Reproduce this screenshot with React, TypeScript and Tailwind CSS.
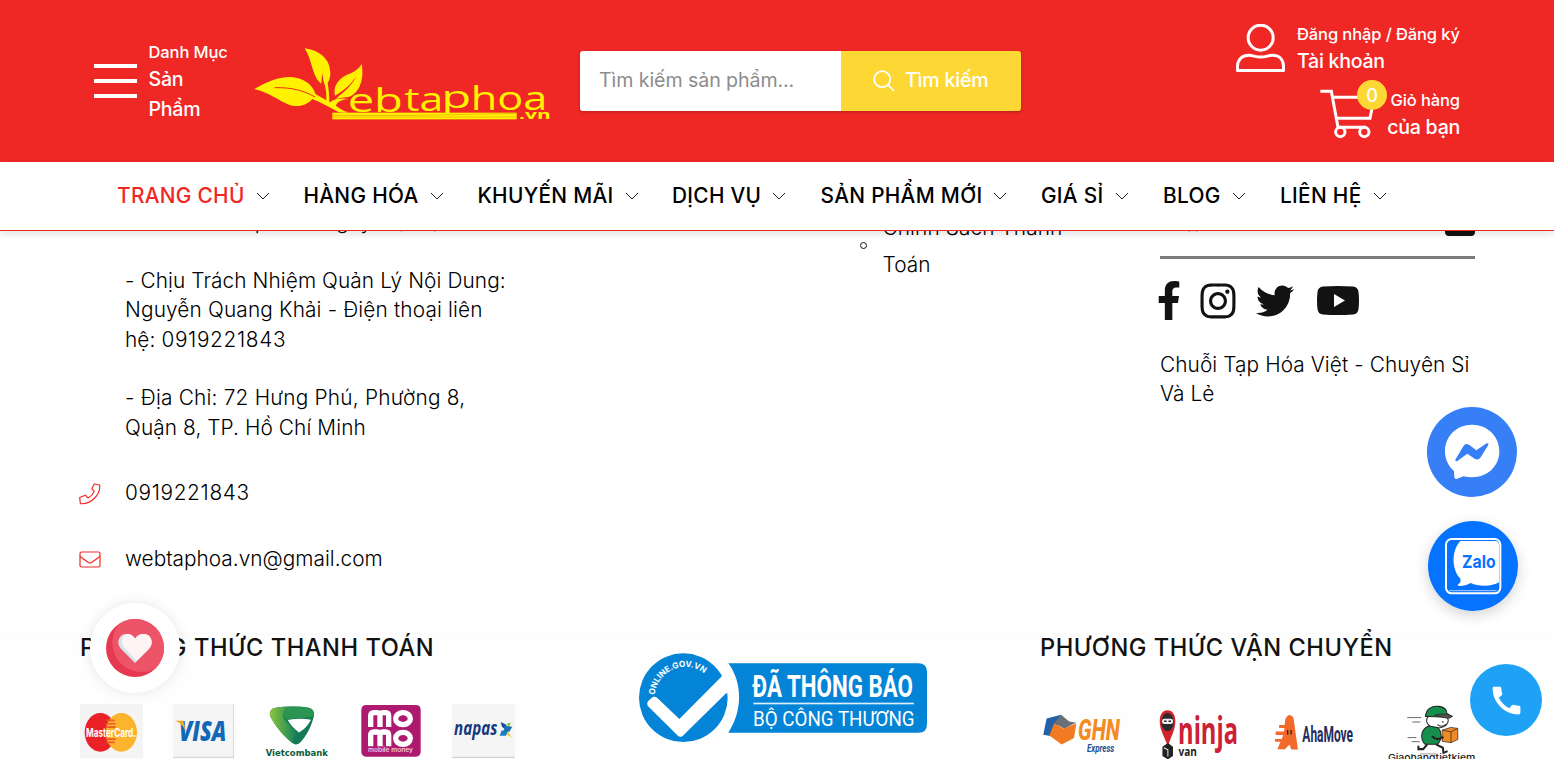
import React from "react";
import { FaFacebookF, FaInstagram, FaTwitter } from "react-icons/fa";
import { MdCall } from "react-icons/md";

const INTER = "Inter, sans-serif";

const menu = [
  { label: "TRANG CHỦ", active: true },
  { label: "HÀNG HÓA" },
  { label: "KHUYẾN MÃI" },
  { label: "DỊCH VỤ" },
  { label: "SẢN PHẨM MỚI" },
  { label: "GIÁ SỈ" },
  { label: "BLOG" },
  { label: "LIÊN HỆ" },
];

type FitProps = {
  x: number;
  y: number;
  w: number;
  size: number;
  fill: string;
  font?: string;
  weight?: number;
  italic?: boolean;
  children: string;
};

/** Logo lettering stretched to a fixed width. */
function Fit({ x, y, w, size, fill, font = INTER, weight = 400, italic, children }: FitProps) {
  return (
    <text
      x={x}
      y={y}
      textLength={w}
      lengthAdjust="spacingAndGlyphs"
      fontSize={size}
      fontFamily={font}
      fontWeight={weight}
      fontStyle={italic ? "italic" : "normal"}
      fill={fill}
    >
      {children}
    </text>
  );
}

function Chevron() {
  return (
    <svg className="ml-[11px] h-[8px] w-[14px] shrink-0" viewBox="0 0 14 8" fill="none" stroke="#222" strokeWidth="1">
      <path d="M1 1l6 6 6-6" />
    </svg>
  );
}

function BrandLogo() {
  return (
    <svg className="h-[75px] w-[300px] shrink-0 overflow-visible" viewBox="522 80 900 225">
      <g fill="#fff200">
        <path d="M523 206C560 185 590 170 630 170C670 172 696 190 707 222C735 236 775 262 800 277L775 275C750 262 722 246 697 236C685 250 665 259 645 257C610 254 580 220 523 206Z" />
        <path d="M674 84C715 90 750 112 751 158C751 172 747 182 743 188C746 205 748 228 748 246L739 242C740 222 738 200 731 184C730 178 728 167 727 158C725 170 725 180 724 190C697 172 698 122 674 84Z" />
        <path d="M845 130C852 170 843 205 818 224C800 235 785 230 768 236C778 222 812 206 829 166C812 196 785 214 765 226C758 190 785 170 805 162C825 153 838 145 845 130Z" />
        <path d="M750 246C760 236 780 232 806 236C785 238 768 245 768 258C775 268 790 272 806 276L782 276C765 268 750 258 750 246Z" />
      </g>
      <path d="M584 202C635 201 670 210 705 230" fill="none" stroke="#ef2826" strokeWidth="3" />
      <Fit x={803} y={274} w={166} size={98} fill="#fff200" font="Open Sans" weight={500}>eb</Fit>
      <Fit x={973} y={271} w={117} size={98} fill="#fff200" font="Open Sans" weight={500}>ta</Fit>
      <Fit x={1084} y={262} w={90} size={92} fill="#fff200" font="Open Sans" weight={500}>p</Fit>
      <Fit x={1172} y={268} w={230} size={100} fill="#fff200" font="Open Sans" weight={500}>hoa</Fit>
      <rect x="757" y="277" width="553" height="20" fill="#fff200" />
      <path d="M757 285H1010L1310 279M757 290H1310" fill="none" stroke="#e8a310" strokeWidth="2" />
      <Fit x={1317} y={297} w={95} size={38} fill="#fff200" font="Open Sans" weight={700}>.vn</Fit>
    </svg>
  );
}

function UserIcon() {
  return (
    <svg className="h-[48px] w-[49px] shrink-0" viewBox="108 42 147 144" fill="none" stroke="#fff" strokeWidth="9">
      <circle cx="182" cy="83" r="37.5" />
      <path d="M112.500 181.500V170C112.500 150 125 136 146 136C160 136 165 141 182 141C199 141 204 136 218 136C239 136 250.500 150 250.500 170V181.500Z" strokeLinejoin="round" />
    </svg>
  );
}

function CartIcon() {
  return (
    <svg className="h-[48px] w-[54px] shrink-0 overflow-visible" viewBox="361 240 162 144" fill="none" stroke="#fff" strokeWidth="9">
      <path d="M362 244H395L415 352H498" />
      <path d="M399 262H524L511 325H411" />
      <circle cx="422" cy="366" r="14" />
      <circle cx="494" cy="366" r="14" />
    </svg>
  );
}

function PaymentLogos() {
  return (
    <div className="flex h-[55px] items-start">
      <svg className="h-[54.5px] w-[63px] shrink-0" viewBox="60 343 189 163">
        <rect x="60" y="343" width="189" height="163" fill="#f4f4f5" />
        <ellipse cx="121" cy="428" rx="47" ry="58" fill="#ea2127" />
        <ellipse cx="184" cy="428" rx="47" ry="58" fill="#fcb42e" />
        <path d="M139 392H164M137 402H167M137 412H167M137 448H167M139 458H164" stroke="#ee5a28" strokeWidth="5" />
        <Fit x={78} y={441} w={150} size={34} fill="#fff" weight={700}>MasterCard.</Fit>
      </svg>
      <svg className="ml-[30px] h-[54.5px] w-[61px] shrink-0" viewBox="339 343 183 163">
        <rect x="339" y="343" width="183" height="163" fill="#f5f5f6" />
        <path d="M521 343V506M339 503H521" stroke="#d5dade" strokeWidth="4" />
        <Fit x={357} y={454} w={142} size={86} fill="#1268b8" font="Open Sans" weight={800} italic>VISA</Fit>
        <path d="M345 393H370L377 424C370 408 360 399 345 393Z" fill="#f6a828" />
      </svg>
      <svg className="ml-[32px] h-[54.5px] w-[62px] shrink-0 overflow-visible" viewBox="620 343 186 163">
        <defs>
          <linearGradient id="vcb" x1="0" y1="0" x2="1" y2="0">
            <stop offset="0" stopColor="#8cc63e" />
            <stop offset="1" stopColor="#12805a" />
          </linearGradient>
        </defs>
        <path d="M648 354Q697 346 748 354Q766 358 764 377C757 410 740 440 722 459Q710 469 698 459C672 438 648 410 632 379Q628 358 648 354Z" fill="#147a55" />
        <path d="M648 354Q665 350 685 351C670 365 668 376 675 390L712 428L698 459C672 438 648 410 632 379Q628 358 648 354Z" fill="url(#vcb)" />
        <path d="M685 351Q725 349 748 354Q764 358 764 377C750 387 710 381 680 390C664 376 672 359 685 351Z" fill="#2b9450" />
        <path d="M685 391C710 386 733 386 755 390C747 405 737 418 719 428C705 418 693 406 685 391Z" fill="#fff" />
        <Fit x={619} y={500} w={187} size={26} fill="#0d5a3c" font="DejaVu Sans" weight={700}>Vietcombank</Fit>
      </svg>
      <svg className="ml-[32.5px] h-[54px] w-[60px] shrink-0" viewBox="902 344 180 162">
        <rect x="903" y="347" width="178" height="155" rx="14" fill="#ad1a70" />
        <g fill="none" stroke="#fff" strokeWidth="16">
          <path d="M931 413V380Q931 370 941 370H951Q959 370 959 380V413M959 380Q959 370 968 370H976Q985 370 985 380V413" />
          <path d="M931 471V438Q931 428 941 428H951Q959 428 959 438V471M959 438Q959 428 968 428H976Q985 428 985 438V471" />
          <ellipse cx="1028" cy="388" rx="22" ry="18" />
          <ellipse cx="1028" cy="447" rx="22" ry="18" />
        </g>
        <Fit x={923} y={487} w={135} size={17} fill="#f3c9df" weight={600}>mobile money</Fit>
      </svg>
      <svg className="ml-[31px] h-[54.5px] w-[63px] shrink-0" viewBox="1175 343 189 163">
        <rect x="1175" y="343" width="189" height="163" fill="#f5f5f6" />
        <path d="M1175 503H1364" stroke="#ccd4da" strokeWidth="4" />
        <Fit x={1181} y={436} w={130} size={58} fill="#14387f" font="Open Sans" weight={700} italic>napas</Fit>
        <path d="M1321 397L1338 405L1340 423L1325 411Z" fill="#174a92" />
        <path d="M1318 438L1324 422L1345 421L1337 438Z" fill="#1a7ec2" />
        <path d="M1340 401L1352 398L1344 416Z" fill="#8cc63e" />
        <path d="M1340 420L1354 444L1342 436Z" fill="#f3bd1f" />
        <path d="M1330 408L1356 411L1347 426L1332 426Z" fill="#1d6fb0" />
      </svg>
    </div>
  );
}

function GovBadge() {
  return (
    <svg className="h-[90px] w-[288px] shrink-0 overflow-visible" viewBox="57 38 864 270">
      <path d="M325 69H895Q921 69 921 95V250Q921 277 895 277H325C366 215 370 130 325 69Z" fill="#0484d6" />
      <circle cx="190" cy="172" r="133" fill="#0484d6" />
      <path d="M83 196Q79 187 87 180L98 170Q106 167 112 173L178 236L301 112L325 152L188 287Q180 293 172 285Z" fill="#fff" />
      <path d="M301 112L318 95L340 140L318 160Z" fill="#fff" />
      <path id="arc" d="M104 164A92 92 0 0 1 262 108" fill="none" />
      <text fontFamily="Inter, sans-serif" fontSize="25" fontWeight="700" fill="#fff">
        <textPath href="#arc" textLength="198" lengthAdjust="spacingAndGlyphs">ONLINE.GOV.VN</textPath>
      </text>
      <Fit x={397} y={169} w={482} size={92} fill="#fff" font="Roboto" weight={700}>ĐÃ THÔNG BÁO</Fit>
      <rect x="400" y="187" width="482" height="5" fill="#d9efff" />
      <Fit x={399} y={256} w={485} size={60} fill="#fff" font="Roboto">BỘ CÔNG THƯƠNG</Fit>
    </svg>
  );
}

function ShippingLogos() {
  return (
    <div className="flex h-[55px] items-start">
      <svg className="mt-[9.5px] ml-[3px] h-[41px] w-[77px] shrink-0 overflow-visible" viewBox="68 275 224 120">
        <path d="M78 288L120 277L132 300L110 300L105 342L68 336Z" fill="#2462a8" />
        <path d="M120 277L144 297L164 300L130 318L100 302Z" fill="#6d6f78" />
        <path d="M100 302L128 318L165 302L158 345L122 364L86 338Z" fill="#f27a22" />
        <Fit x={170} y={350} w={122} size={86} fill="#f58a1f" font="Roboto" weight={800} italic>GHN</Fit>
        <Fit x={196} y={386} w={80} size={32} fill="#26508f" font="Roboto" weight={700} italic>Express</Fit>
      </svg>
      <svg className="mt-[6px] ml-[39px] h-[49px] w-[79px] shrink-0 overflow-visible" viewBox="408 265 232 144">
        <path d="M433 266C448 266 456 280 456 298C456 325 442 345 434 372C425 345 410 325 410 298C410 280 418 266 433 266Z" fill="#d2232f" />
        <ellipse cx="433" cy="300" rx="18" ry="27" fill="#2b2b2e" />
        <rect x="417" y="291" width="32" height="15" rx="6" fill="#eee" />
        <path d="M423 298H430M436 298H443" stroke="#222" strokeWidth="5" />
        <path d="M418 373L434 362L449 373V400L434 410L418 400Z" fill="#222" />
        <path d="M422 376L434 382V402" fill="none" stroke="#eee" strokeWidth="3" />
        <Fit x={464} y={366} w={176} size={108} fill="#cc2036" font="Open Sans" weight={700}>ninja</Fit>
        <Fit x={465} y={400} w={54} size={38} fill="#222" font="Open Sans" weight={700}>van</Fit>
      </svg>
      <svg className="mt-[10px] ml-[37px] h-[36px] w-[78px] shrink-0 overflow-visible" viewBox="748 277 228 105">
        <path d="M778 292Q790 270 802 288L815 381H796L790 366L777 380H755L764 358H748V350H768L772 338H750V328H774L776 318H760V309H776Z" fill="#f26a2b" />
        <path d="M785 324V337M795 324V337" stroke="#222" strokeWidth="4" />
        <Fit x={828} y={358} w={148} size={66} fill="#1f2d5c" font="Roboto" weight={700}>AhaMove</Fit>
      </svg>
      <svg className="ml-[36px] h-[58px] w-[88px] shrink-0 overflow-visible" viewBox="1080 247 258 171">
        <path d="M1133 287H1174M1148 300H1172M1134 346H1160M1146 358H1170" stroke="#555" strokeWidth="2.5" />
        <ellipse cx="1222" cy="296" rx="32" ry="22" fill="#fff" stroke="#333" strokeWidth="3" />
        <path d="M1187 284C1188 262 1205 252 1225 254C1242 256 1250 265 1250 275L1265 284C1250 290 1230 282 1187 284Z" fill="#15904c" stroke="#222" strokeWidth="3" />
        <path d="M1214 280Q1240 272 1265 282Q1262 292 1246 288Z" fill="#555" stroke="#222" strokeWidth="2" />
        <path d="M1238 297V302M1222 308Q1235 318 1248 306" fill="none" stroke="#222" strokeWidth="3" />
        <path d="M1196 312C1172 322 1170 352 1186 366H1222C1238 350 1234 325 1222 316Z" fill="#15904c" stroke="#222" strokeWidth="3" />
        <path d="M1236 324L1262 316L1282 319V352L1262 361L1236 357Z" fill="#f08a24" stroke="#222" strokeWidth="2" />
        <path d="M1236 324L1262 329V361M1262 329L1282 319" fill="none" stroke="#222" strokeWidth="2" />
        <path d="M1206 342C1216 354 1228 352 1240 344M1192 366L1180 380H1166V370M1218 366L1238 376L1240 391L1252 386" fill="none" stroke="#222" strokeWidth="6" />
        <path d="M1170 394H1218" stroke="#777" strokeWidth="2" />
        <Fit x={1076} y={416} w={258} size={28} fill="#222" weight={500}>Giaohangtietkiem</Fit>
      </svg>
    </div>
  );
}

function Header() {
  return (
    <header className="flex h-[162px] shrink-0 items-start bg-[#ef2826] pl-[94px] font-medium text-white">
      <button className="flex font-medium">
        <span className="mt-[64px] flex w-[43px] flex-col gap-[11px]">
          <span className="h-[4px] bg-white" />
          <span className="h-[4px] bg-white" />
          <span className="h-[4px] bg-white" />
        </span>
        <span className="mt-[37px] ml-[11.5px] flex w-[105.5px] flex-col text-left text-[19.6px] leading-[30px] tracking-[-0.28px]">
          <span className="text-[16.5px] tracking-[-0.1px]">Danh Mục</span>
          <span className="-mt-[3px]">Sản</span>
          <span>Phẩm</span>
        </span>
      </button>
      <div className="mt-[46.5px]">
        <BrandLogo />
      </div>
      <form className="mt-[51px] ml-[26px] flex h-[60px] w-[441px] overflow-hidden rounded-[3px] text-[19.6px] shadow-[0_1px_3px_rgba(0,0,0,0.25)]">
        <div className="flex w-[261px] items-center bg-white pl-[19px] font-normal tracking-[-0.08px] text-[#8c8c8c]">
          Tìm kiếm sản phẩm...
        </div>
        <div className="flex flex-1 items-center bg-[#fdd835] pl-[32px]">
          <svg className="mr-[10px] h-[22px] w-[22px]" viewBox="0 0 22 22" fill="none" stroke="#fff" strokeWidth="1.7">
            <circle cx="9.2" cy="9.2" r="8" />
            <path d="M15 15l6 6" />
          </svg>
          <span className="tracking-[-0.2px]">Tìm kiếm</span>
        </div>
      </form>
      <div className="mt-[19px] mr-[94px] ml-auto flex flex-col items-end">
        <div className="flex h-[66px]">
          <div className="mt-[5px]">
            <UserIcon />
          </div>
          <div className="ml-[12px] w-[163px] text-[19.6px] leading-[30px] tracking-[-0.28px]">
            <div className="text-[16.5px] tracking-[-0.1px] whitespace-nowrap">Đăng nhập / Đăng ký</div>
            <div className="-mt-[3px]">Tài khoản</div>
          </div>
        </div>
        <div className="flex">
          <div className="relative mt-[5px]">
            <CartIcon />
            <span className="absolute -top-[10px] left-[37px] flex h-[30px] w-[30px] items-center justify-center rounded-full bg-[#fdd835] text-[18px]">
              0
            </span>
          </div>
          <div className="w-[86px] text-right text-[19.6px] leading-[30px] tracking-[-0.28px]">
            <div className="text-[16.5px] tracking-[-0.1px]">Giỏ hàng</div>
            <div className="-mt-[3px]">của bạn</div>
          </div>
        </div>
      </div>
    </header>
  );
}

function Nav() {
  return (
    <nav className="relative z-10 h-[69px] shrink-0 border-b border-[#ef2826] bg-white pl-[117px] shadow-[0_3px_8px_rgba(0,0,0,0.12)]">
      <ul className="grid h-[68px] grid-cols-[186.5px_174px_194.5px_148.5px_220.5px_122px_117px_auto] items-center text-[20.8px] font-medium tracking-[0.32px] whitespace-nowrap text-black">
        {menu.map((m) => (
          <li key={m.label} className="flex items-center">
            <span className={m.active ? "text-[#ef2826]" : ""}>{m.label}</span>
            <Chevron />
          </li>
        ))}
      </ul>
    </nav>
  );
}

export default function App() {
  return (
    <div className="relative flex h-[759px] w-full flex-col overflow-hidden bg-white font-[Inter,sans-serif] text-[#121212]">
      <Header />
      <Nav />
      <main className="flex min-h-0 flex-1 flex-col">
        <div className="flex h-[402px] shrink-0 text-[20.8px] leading-[29.4px] font-light tracking-[0.1px] whitespace-nowrap text-black">
          <section className="-mt-[24px] w-[859px] pl-[80px]">
            <div className="pl-[45px]">
              <p className="tracking-[0.3px]">- KH &amp; ĐT cấp lần 1 ngày 12/05/2020</p>
              <p className="mt-[29.4px]">
                - Chịu Trách Nhiệm Quản Lý Nội Dung:
                <br />
                <span className="tracking-[0.16px]">Nguyễn Quang Khải - Điện thoại liên</span>
                <br />
                hệ: <span className="tracking-[0.66px]">0919221843</span>
              </p>
              <p className="mt-[29.4px]">
                <span className="tracking-[0.22px]">- Địa Chỉ: 72 Hưng Phú, Phường 8,</span>
                <br />
                Quận 8, TP. Hồ Chí Minh
              </p>
            </div>
            <div className="mt-[36px] flex items-center">
              <svg className="mt-[3px] mr-[24px] -ml-px h-[22px] w-[22px]" viewBox="58 671 65 65" fill="none" stroke="#ef2826" strokeWidth="3.5" strokeLinejoin="round">
                <path d="M103 674L119 677C122 705 94 735 62 732L60 714L77 707L84 715C93 711 99 704 103 695L96 688Z" />
              </svg>
              <span className="tracking-[0.66px]">0919221843</span>
            </div>
            <div className="mt-[36px] flex items-center">
              <svg className="mt-[3px] mr-[24px] -ml-px h-[17px] w-[22px]" viewBox="0 0 22 17" fill="none" stroke="#ef2826" strokeWidth="1.2">
                <rect x="1" y="1" width="20" height="15" rx="1.5" />
                <path d="M1 5.500l8.500 6q1.500 1 3 0l8.500-6" />
              </svg>
              <span className="tracking-[0.02px]">webtaphoa.vn@gmail.com</span>
            </div>
          </section>
          <section className="flex w-[301px] pl-[1px]">
            <span className="mt-[11px] h-[7px] w-[7px] shrink-0 rounded-full border border-[#121212]" />
            <p className="-mt-[22px] ml-[15.5px] leading-[37px]">
              Chính Sách Thanh
              <br />
              Toán
            </p>
          </section>
          <section className="w-[315px]">
            <div className="-mt-[32px] flex h-[60px] justify-between border-b-[3px] border-[#7b7b7b]">
              <span className="mt-[8px] text-[18px] text-[#777]">Nhập email...</span>
              <span className="mt-[7px] h-[30px] w-[30px] rounded-[4px] bg-[#121212]" />
            </div>
            <div className="mt-[22px] flex h-[39px] items-center text-[#121212]">
              <FaFacebookF className="-ml-[3px] h-[39px] w-[24px] shrink-0" preserveAspectRatio="none" />
              <FaInstagram className="ml-[17px] h-[40px] w-[40px] shrink-0" />
              <FaTwitter className="ml-[18px] h-[38px] w-[38px] shrink-0" />
              <svg className="ml-[22.5px] h-[29px] w-[42px] shrink-0" viewBox="0 0 42 29">
                <path d="M6 .5Q21-.5 36 .5Q41 1 41.500 6Q42.500 14.500 41.500 23Q41 28 36 28.500Q21 29.500 6 28.500Q1 28 .5 23Q-.5 14.500 .5 6Q1 1 6 .5Z" fill="#121212" />
                <path d="M17 8v13l11-6.500z" fill="#fff" />
              </svg>
            </div>
            <p className="mt-[30px]">
              Chuỗi Tạp Hóa Việt - Chuyên Sỉ
              <br />
              Và Lẻ
            </p>
          </section>
        </div>
        <footer className="flex flex-1 border-t border-[#fafafa] bg-[#fefefe] pl-[80px] whitespace-nowrap">
          <section className="w-[559px] shrink-0">
            <h3 className="mt-[-3px] mb-[40px] text-[23.6px] leading-[33px] font-medium tracking-[0.56px]">PHƯƠNG THỨC THANH TOÁN</h3>
            <PaymentLogos />
          </section>
          <section className="w-[401px] shrink-0 pt-[19px]">
            <GovBadge />
          </section>
          <section className="shrink-0">
            <h3 className="mt-[-3px] mb-[40px] text-[23.6px] leading-[33px] font-medium tracking-[0.54px]">PHƯƠNG THỨC VẬN CHUYỂN</h3>
            <ShippingLogos />
          </section>
        </footer>
      </main>

      <button className="absolute top-[603px] left-[90px] flex h-[90px] w-[90px] items-center justify-center rounded-full bg-white shadow-[0_0_14px_rgba(0,0,0,0.1)]">
        <svg className="h-[58px] w-[58px]" viewBox="138 87 174 174">
          <defs>
            <clipPath id="heart-disc">
              <circle cx="225" cy="174" r="87" />
            </clipPath>
          </defs>
          <circle cx="225" cy="174" r="87" fill="#e63950" />
          <circle cx="245" cy="158" r="88" fill="#ee5468" clipPath="url(#heart-disc)" />
          <path d="M225 219L184 178C170 164 172 140 192 133C206 129 218 135 225 146C232 135 244 129 258 133C278 140 280 164 266 178Z" fill="#d7e2e9" />
          <path d="M230 213L192 172C182 160 184 140 200 132C212 131 220 137 225 146C232 135 244 129 258 133C278 140 280 164 266 178Z" fill="#fff4f4" />
        </svg>
      </button>

      <button className="absolute top-[407px] left-[1427px] h-[90px] w-[90px]">
        <svg className="h-[90px] w-[90px]" viewBox="81 51 270 270">
          <circle cx="216" cy="186" r="135" fill="#377ff7" />
          <path d="M216 104C262 104 298 138 298 184C298 229 262 262 216 262Q204 262 190 259L170 267Q164 268 163 262L162 243C145 229 135 208 135 184C135 138 170 104 216 104Z" fill="#fff" />
          <path d="M166 209L190 169Q197 158 208 165L229 181L260 160Q267 158 265 165L241 203Q234 212 224 206L202 191L172 213Q165 215 166 209Z" fill="#377ff7" />
        </svg>
      </button>

      <button className="absolute top-[520.5px] left-[1428px] h-[90px] w-[90px] rounded-full shadow-[0_4px_14px_rgba(0,0,0,0.18)]">
        <svg className="h-[90px] w-[90px]" viewBox="84 391 270 270">
          <circle cx="219" cy="526" r="135" fill="#0573ff" />
          <rect x="138" y="445" width="163" height="163" rx="17" fill="none" stroke="#fff" strokeWidth="6" />
          <path d="M181 451H285Q297 451 297 463V575C275 589 235 588 212 577Q195 588 175 585Q171 583 175 580Q184 575 181 564C154 535 154 480 181 451Z" fill="#fff" />
          <path d="M147 600H290" stroke="#fff" strokeWidth="2" />
          <Fit x={186} y={531} w={101} size={54} fill="#0573ff" weight={700}>Zalo</Fit>
        </svg>
      </button>

      <button className="absolute top-[664px] left-[1470px] flex h-[72px] w-[72px] items-center justify-center rounded-full bg-[#1fa2f6] text-white">
        <MdCall className="h-[37px] w-[37px]" />
      </button>
    </div>
  );
}
